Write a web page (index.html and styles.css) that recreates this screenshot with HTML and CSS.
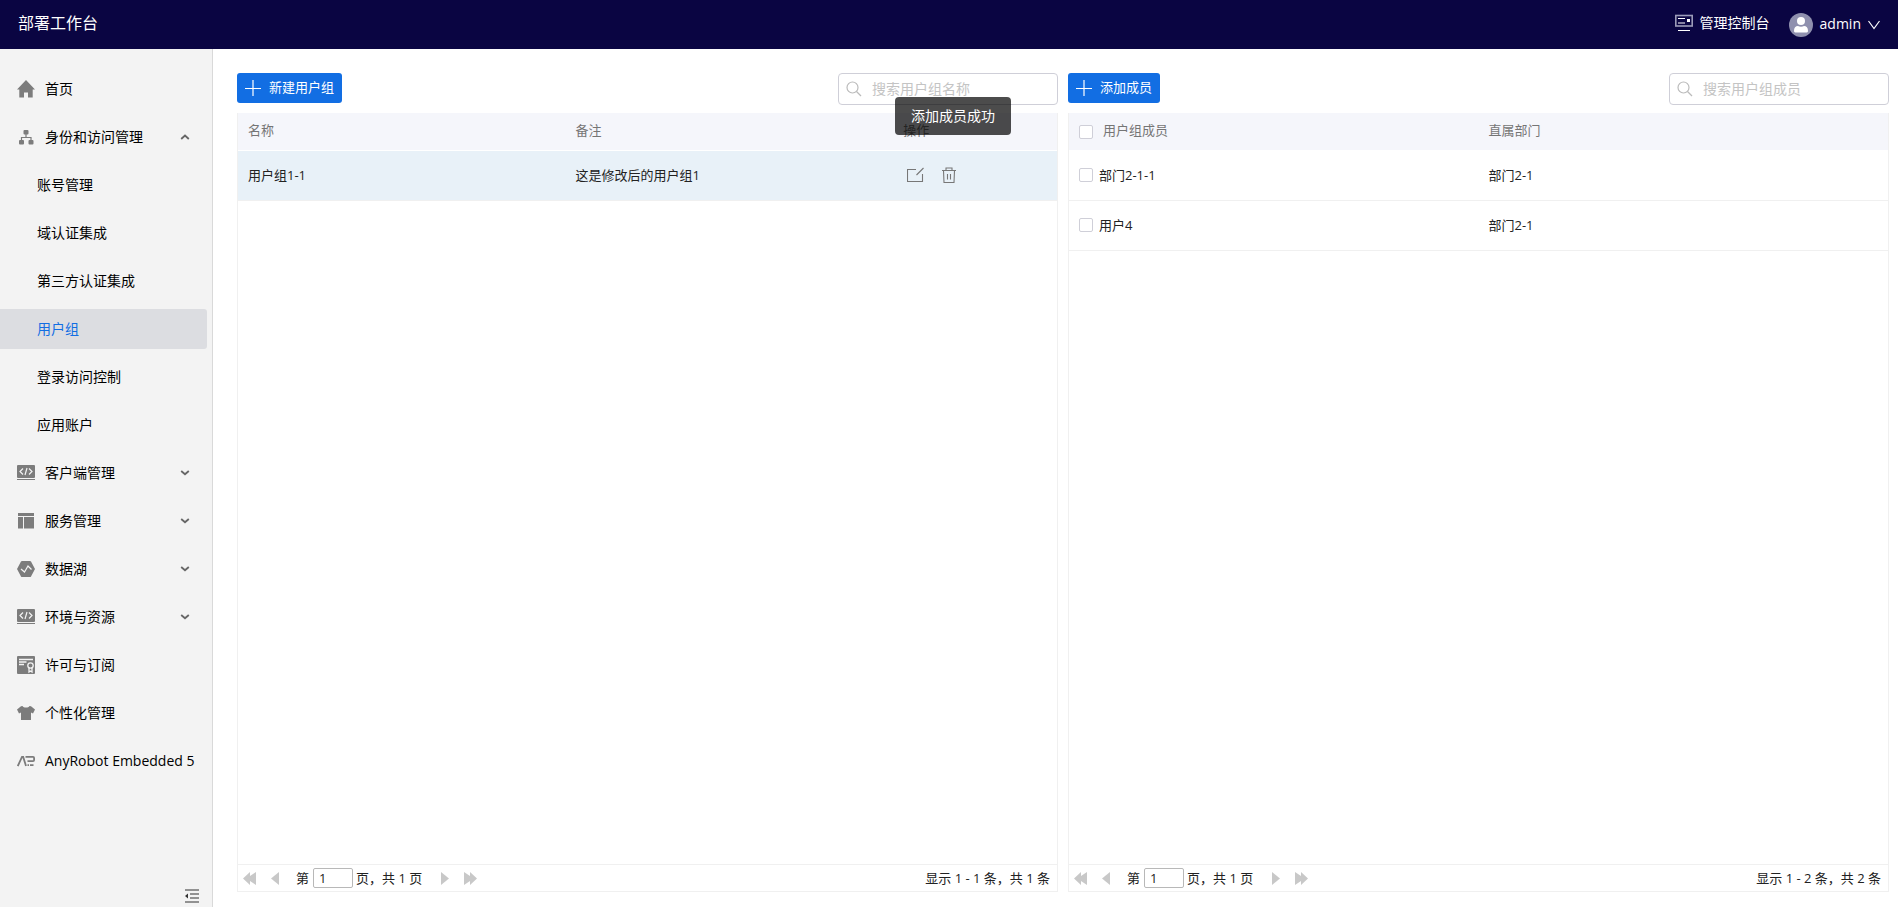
FILE: index.html
```html
<!DOCTYPE html>
<html lang="zh-CN">
<head>
<meta charset="utf-8">
<title>部署工作台</title>
<link rel="stylesheet" href="styles.css">
</head>
<body>
<svg class="sprite" aria-hidden="true">
  <symbol id="code" viewBox="0 0 18 18">
    <rect x="0" y="1" width="18" height="13" rx="1" fill="#7c7c7c"/>
    <path d="M0 15.500h18" stroke="#7c7c7c" stroke-width="1"/>
    <path d="M6 4.500 3 7.500 6 10.500M12 4.500 15 7.500 12 10.500M10 4 8 11" fill="none" stroke="#f3f3f3" stroke-width="1.200"/>
  </symbol>
  <symbol id="down" viewBox="0 0 10 10"><path d="M1.200 3 5 6.300 8.800 3" fill="none" stroke="#666" stroke-width="1.800"/></symbol>
  <symbol id="plus" viewBox="0 0 16 16"><path d="M8 0v16M0 8.500h16" stroke="#fff" stroke-width="1.200"/></symbol>
  <symbol id="search" viewBox="0 0 16 16"><circle cx="6.500" cy="6.500" r="5.500" fill="none" stroke="#bbb" stroke-width="1.200"/><path d="m10.500 10.500 4.500 4.500" stroke="#bbb" stroke-width="1.200"/></symbol>
  <symbol id="prev" viewBox="0 0 8 13"><path d="M8 0v13L0 6.500z" fill="#c8c8c8"/></symbol>
  <symbol id="next" viewBox="0 0 8 13"><path d="M0 0v13l8-6.500z" fill="#c8c8c8"/></symbol>
  <symbol id="first" viewBox="0 0 14 13"><path d="M7 0v4L13 0v13L7 9v4L0 6.500z" fill="#c8c8c8"/></symbol>
  <symbol id="last" viewBox="0 0 14 13"><path d="M7 0v4L1 0v13l6-4v4L14 6.500z" fill="#c8c8c8"/></symbol>
</svg>

<header class="topbar">
  <h1 class="brand">部署工作台</h1>
  <a class="console" href="#">
    <svg width="18" height="18" viewBox="0 0 18 18" fill="none"><rect x=".8" y="1.500" width="16.400" height="10.500" stroke="#9b9bb8" stroke-width="1.600"/><path d="M3 4.500h7M3 9h7M3 16.500h12" stroke="#fff" stroke-width="1.200"/><rect x="12" y="5" width="3" height="3" fill="#fff"/></svg>
    <span>管理控制台</span>
  </a>
  <button class="user" type="button">
    <svg width="24" height="24" viewBox="0 0 24 24"><circle cx="12" cy="12" r="12" fill="#8f90ae"/><circle cx="12" cy="8" r="4" fill="#fff"/><path d="M5 18c0-3.500 1.500-5 4-5 1.500 1 4.500 1 6 0 2.500 0 4 1.500 4 5 0 1-1 1.500-2 1.500H7c-1 0-2-.5-2-1.500z" fill="#fff"/></svg>
    <span>admin</span>
    <svg width="12" height="10" viewBox="0 0 12 10"><path d="m.5 1 5.500 7.500L11.500 1" fill="none" stroke="#fff" stroke-width="1.200"/></svg>
  </button>
</header>

<div class="body">
  <nav class="sidebar">
    <ul class="menu">
      <li><a class="item" href="#"><svg class="icon" viewBox="0 0 18 18"><path d="M9 0 0 9.500h2.300V17.500h4.700v-5h4v5h4.700V9.500H18z" fill="#7c7c7c"/></svg><span>首页</span></a></li>
      <li><a class="item" href="#"><svg class="icon" viewBox="0 0 18 18" fill="#7c7c7c"><rect x="6.500" y="2" width="5" height="4.500" rx="1"/><rect x="2" y="12" width="5" height="4.500" rx="1"/><rect x="11.500" y="12" width="5" height="4.500" rx="1"/><path d="M9 6v3.500M4.500 12V9.500h9.500V12" fill="none" stroke="#7c7c7c" stroke-width="1.200"/></svg><span>身份和访问管理</span><svg class="arrow" viewBox="0 0 10 10"><path d="M1.200 7 5 3.500 8.800 7" fill="none" stroke="#666" stroke-width="1.800"/></svg></a></li>
      <li><a class="item sub" href="#">账号管理</a></li>
      <li><a class="item sub" href="#">域认证集成</a></li>
      <li><a class="item sub" href="#">第三方认证集成</a></li>
      <li><a class="item sub active" href="#">用户组</a></li>
      <li><a class="item sub" href="#">登录访问控制</a></li>
      <li><a class="item sub" href="#">应用账户</a></li>
      <li><a class="item" href="#"><svg class="icon"><use href="#code"/></svg><span>客户端管理</span><svg class="arrow"><use href="#down"/></svg></a></li>
      <li><a class="item" href="#"><svg class="icon" viewBox="0 0 18 18" fill="#7c7c7c"><path d="M1 1h16v3H1zM1 5h5v11.500H1zM7 5h10v11.500H7z"/></svg><span>服务管理</span><svg class="arrow"><use href="#down"/></svg></a></li>
      <li><a class="item" href="#"><svg class="icon" viewBox="0 0 18 18"><path d="M5 1h8q.7 0 1 .6L18 9l-4 7.400q-.3.600-1 .6H5q-.7 0-1-.6L0 9l4-7.400Q4.300 1 5 1z" fill="#7c7c7c"/><path d="m4 9 3.500 3 3.500-6 3.500 3.500" fill="none" stroke="#f3f3f3" stroke-width="1.200"/></svg><span>数据湖</span><svg class="arrow"><use href="#down"/></svg></a></li>
      <li><a class="item" href="#"><svg class="icon"><use href="#code"/></svg><span>环境与资源</span><svg class="arrow"><use href="#down"/></svg></a></li>
      <li><a class="item" href="#"><svg class="icon" viewBox="0 0 18 18"><rect width="18" height="18" rx="1" fill="#7c7c7c"/><g fill="none" stroke="#f3f3f3" stroke-width="1.300"><path d="M2 3.500h14M2 6h7.500M2 8.500h5"/><circle cx="13.500" cy="9.500" r="2.700"/><path d="M12 11.500V16l1.500-1 1.500 1v-4.500"/></g></svg><span>许可与订阅</span></a></li>
      <li><a class="item" href="#"><svg class="icon" viewBox="0 0 18 18"><path d="M5.500 2c1 2 6 2 7 0l1.500.3L18 5.500l-2 4-2-1V16H4V8.500l-2 1-2-4 4-3.200z" fill="#7c7c7c"/></svg><span>个性化管理</span></a></li>
      <li><a class="item" href="#"><svg class="icon" viewBox="0 0 18 18" fill="none" stroke="#7c7c7c" stroke-width="1.800"><path d="M.8 14 5 4.900h1.200L9 14M8.500 4.900H16q1.100 0 1.100 1.100v2q0 1.100-1.100 1.100h-5.500M10.500 13.100h1.500M13 13.100h3.500"/></svg><span>AnyRobot Embedded 5</span></a></li>
    </ul>
    <button class="collapse" type="button" aria-label="收起菜单"><svg width="14" height="14" viewBox="0 0 14 14"><path d="M0 1h14M5 5h9M5 9h9M0 13h14" stroke="#333" stroke-width="1.200"/><path d="M3 4.500v5L0 7z" fill="#333"/></svg></button>
  </nav>

  <main class="panels">
    <section class="panel">
      <div class="toolbar">
        <button class="primary" type="button"><svg width="16" height="16"><use href="#plus"/></svg><span>新建用户组</span></button>
        <label class="search"><svg width="16" height="16"><use href="#search"/></svg><input type="text" placeholder="搜索用户组名称" aria-label="搜索用户组名称"></label>
      </div>
      <div class="grid">
        <table class="groups">
          <colgroup><col class="wide"><col class="wide"><col></colgroup>
          <thead><tr><th>名称</th><th>备注</th><th>操作</th></tr></thead>
          <tbody><tr class="selected"><td>用户组1-1</td><td>这是修改后的用户组1</td><td><div class="actions">
            <button type="button" aria-label="编辑"><svg width="17" height="16" viewBox="0 0 17 16" fill="none" stroke="#777" stroke-width="1.100"><path d="M9 2.500H.5v12h15V7M9.500 8l7-7"/></svg></button>
            <button type="button" aria-label="删除"><svg width="16" height="16" viewBox="0 0 16 16" fill="none" stroke="#777" stroke-width="1.100"><path d="M1 3.500h14M5 3.500V1h6v2.500M2.500 3.500l.5 12h10l.5-12M6.500 7v5.500M9.500 7v5.500"/></svg></button>
          </div></td></tr></tbody>
        </table>
        <footer class="pager">
          <button type="button" aria-label="首页"><svg width="14" height="13"><use href="#first"/></svg></button>
          <button type="button" aria-label="上一页"><svg width="8" height="13"><use href="#prev"/></svg></button>
          <label class="page">第<input type="text" value="1" aria-label="页码"></label><span>页，共 1 页</span>
          <button class="forward" type="button" aria-label="下一页"><svg width="8" height="13"><use href="#next"/></svg></button>
          <button type="button" aria-label="末页"><svg width="14" height="13"><use href="#last"/></svg></button>
          <span class="summary">显示 1 - 1 条，共 1 条</span>
        </footer>
      </div>
    </section>

    <section class="panel">
      <div class="toolbar">
        <button class="primary" type="button"><svg width="16" height="16"><use href="#plus"/></svg><span>添加成员</span></button>
        <label class="search"><svg width="16" height="16"><use href="#search"/></svg><input type="text" placeholder="搜索用户组成员" aria-label="搜索用户组成员"></label>
      </div>
      <div class="grid">
        <table class="members">
          <thead><tr><th><label class="check"><input type="checkbox">用户组成员</label></th><th>直属部门</th></tr></thead>
          <tbody>
            <tr><td><label class="check"><input type="checkbox">部门2-1-1</label></td><td>部门2-1</td></tr>
            <tr><td><label class="check"><input type="checkbox">用户4</label></td><td>部门2-1</td></tr>
          </tbody>
        </table>
        <footer class="pager">
          <button type="button" aria-label="首页"><svg width="14" height="13"><use href="#first"/></svg></button>
          <button type="button" aria-label="上一页"><svg width="8" height="13"><use href="#prev"/></svg></button>
          <label class="page">第<input type="text" value="1" aria-label="页码"></label><span>页，共 1 页</span>
          <button class="forward" type="button" aria-label="下一页"><svg width="8" height="13"><use href="#next"/></svg></button>
          <button type="button" aria-label="末页"><svg width="14" height="13"><use href="#last"/></svg></button>
          <span class="summary">显示 1 - 2 条，共 2 条</span>
        </footer>
      </div>
    </section>
  </main>
</div>
<div class="toast" role="status">添加成员成功</div>
</body>
</html>
```

FILE: styles.css
```css
* { box-sizing: border-box; }
body {
  margin: 0;
  height: 100vh;
  display: flex;
  flex-direction: column;
  font: 13px/20px "Open Sans", "Noto Sans CJK SC", sans-serif;
  color: #222;
  background: #fff;
}
svg { display: block; flex: none; }
.sprite { position: absolute; width: 0; height: 0; }
button, input { font: inherit; color: inherit; }
button { padding: 0; border: 0; background: none; cursor: pointer; }
a { color: inherit; text-decoration: none; }

.topbar {
  flex: none;
  height: 49px;
  display: flex;
  align-items: center;
  padding: 0 18px;
  background: #0a0542;
  color: #fff;
  font-size: 14px;
}
.brand { margin: 0 auto 4px 0; font-size: 16px; line-height: 20px; font-weight: 400; }
.console { display: flex; align-items: center; gap: 7px; margin: 0 19px 4px 0; }
.user { display: flex; align-items: center; gap: 7px; }
.user span { padding-bottom: 2px; }

.body { flex: 1; min-height: 0; display: flex; }
.sidebar {
  flex: none;
  width: 213px;
  display: flex;
  flex-direction: column;
  justify-content: space-between;
  padding-top: 20px;
  border-right: 1px solid #d9d9d9;
  background: #f3f3f3;
}
.menu {
  margin: 0;
  padding: 0 5px 0 0;
  list-style: none;
  display: flex;
  flex-direction: column;
  gap: 8px;
}
.item {
  height: 40px;
  display: flex;
  align-items: center;
  gap: 10px;
  padding: 0 17px 1px;
  border-radius: 0 3px 3px 0;
  color: #000;
  font-size: 14px;
  white-space: nowrap;
}
.sub { padding-left: 37px; }
.active { background: #dcdde1; color: #126ee3; }
.icon { width: 18px; height: 18px; }
.arrow { width: 10px; height: 10px; margin-left: auto; }
.collapse { align-self: flex-end; margin: 0 13px 4px 0; }

.panels {
  flex: 1;
  min-width: 0;
  display: grid;
  grid-template-columns: 1fr 1fr;
  gap: 10px;
  padding: 24px 9px 15px 24px;
}
.panel { min-width: 0; display: flex; flex-direction: column; gap: 8px; }
.toolbar { display: flex; align-items: flex-start; justify-content: space-between; }
.primary {
  height: 30px;
  display: flex;
  align-items: center;
  gap: 8px;
  padding: 0 8px 1px;
  border-radius: 3px;
  background: #126ee3;
  color: #fff;
}
.primary span { padding-bottom: 2px; }
.search {
  width: 220px;
  height: 32px;
  display: flex;
  align-items: center;
  gap: 10px;
  padding: 0 8px 0 7px;
  border: 1px solid #cfcfd8;
  border-radius: 4px;
}
.search input { flex: 1; min-width: 0; padding: 0; border: 0; outline: 0; background: none; font-size: 14px; }
.search input::placeholder { color: #c4c4c4; opacity: 1; }

.grid { flex: 1; display: flex; flex-direction: column; border: 1px solid #f0f0f0; border-top: 0; }
table { width: 100%; table-layout: fixed; border-collapse: separate; border-spacing: 0; }
.wide { width: 40%; }
th, td { padding: 0 10px; text-align: left; font-weight: 400; }
th { height: 38px; padding-bottom: 3px; border-bottom: 1px solid #fff; background: #f5f6fb; color: #757575; }
td { height: 50px; padding-bottom: 1px; border-bottom: 1px solid #f0f0f0; }
.selected td { background: #e8f1f8; }
.actions { display: flex; align-items: center; gap: 17px; padding-left: 4px; }
.check { display: flex; align-items: center; gap: 6px; }
th .check { gap: 10px; }
.check input {
  appearance: none;
  width: 14px;
  height: 14px;
  margin: 0;
  border: 1px solid #cfcfd8;
  border-radius: 2px;
  background: #fff;
}
th .check input { margin-top: 3px; }

.pager {
  height: 27px;
  display: flex;
  align-items: center;
  gap: 14px;
  margin-top: auto;
  padding: 0 7px 0 5px;
  border-top: 1px solid #f0f0f0;
}
.page { display: flex; align-items: center; gap: 4px; margin: 0 -11px 0 3px; }
.page input { width: 40px; height: 20px; padding: 0 5px; border: 1px solid #b8b8b8; border-radius: 2px; background: #fff; }
.pager > span, .page { padding-bottom: 1px; }
.forward { margin-left: 5px; }
.summary { margin-left: auto; }

.toast {
  position: absolute;
  top: 97px;
  left: 895px;
  padding: 9px 16px;
  border-radius: 4px;
  background: rgba(0, 0, 0, .7);
  color: #fff;
  font-size: 14px;
}
```
